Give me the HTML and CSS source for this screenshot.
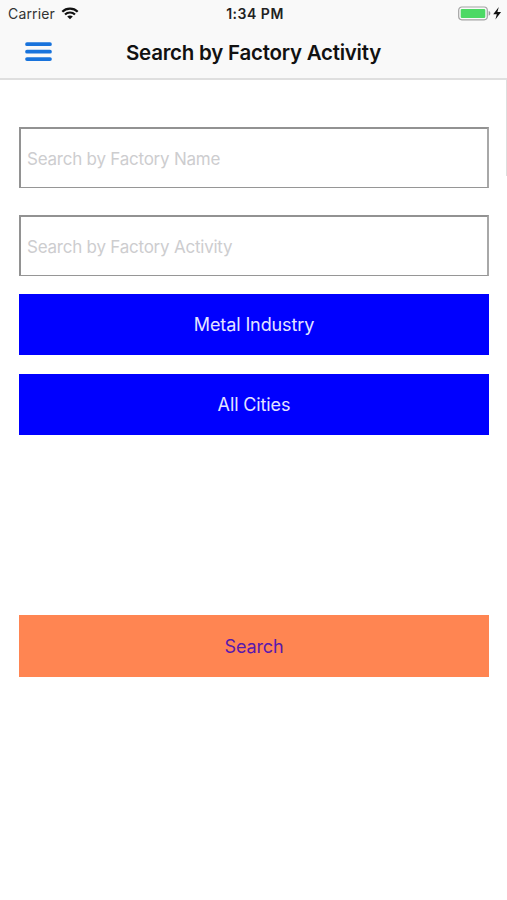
FILE: index.html
```html
<!DOCTYPE html>
<html lang="en">
<head>
<meta charset="utf-8">
<title>Search by Factory Activity</title>
<link rel="stylesheet" href="styles.css">
</head>
<body>
<header class="header">
  <div class="status">
    <div class="carrier"><span class="carrier-name">Carrier</span>
      <svg class="wifi" width="18" height="13" viewBox="0 0 18 13"><path d="M1.3 4.7C5.5.6 12.5.6 16.7 4.7M4 7.5c2.8-2.7 7.2-2.7 10 0" fill="none" stroke="#111" stroke-width="2.2"/><path d="M9 12.3 6.2 9.6c1.6-1.5 4-1.5 5.6 0z" fill="#111"/></svg>
    </div>
    <span class="time">1:34 PM</span>
    <div class="power">
      <svg width="44" height="16" viewBox="0 0 44 16"><rect x=".7" y="1" width="28.6" height="12.8" rx="3.2" fill="#fafafa" stroke="#a3a3a3" stroke-width="1.2"/><rect x="2.7" y="2.9" width="24.6" height="9" rx="1.2" fill="#4cd964"/><path d="M30.7 5.1c2.2.7 2.2 3.9 0 4.6z" fill="#999"/><path d="M40.8 1 35.2 8.2h3.6L37.4 13.5l5.7-7.4h-3.7z" fill="#111"/></svg>
    </div>
  </div>
  <div class="nav">
    <button class="menu" aria-label="Menu"><svg width="27" height="20" viewBox="0 0 27 20"><path d="M2 2.2h23M2 9.7h23M2 17.1h23" stroke="#1873dc" stroke-width="3.7" stroke-linecap="round"/></svg></button>
    <h1 class="title">Search by Factory Activity</h1>
  </div>
</header>
<main class="content">
  <input class="field" type="text" placeholder="Search by Factory Name">
  <input class="field field-activity" type="text" placeholder="Search by Factory Activity">
  <button class="button">Metal Industry</button>
  <button class="button cities">All Cities</button>
  <button class="button search">Search</button>
</main>
</body>
</html>
```
FILE: styles.css
```css
* { box-sizing: border-box; }
body {
  margin: 0;
  height: 900px;
  overflow: hidden;
  background: #fff;
  font-family: Inter, "Liberation Sans", sans-serif;
}
.header {
  height: 80px;
  background: #f9f9f9;
  border-bottom: 2px solid #dfdfdf;
}
.status {
  display: grid;
  grid-template-columns: 1fr auto 1fr;
  align-items: center;
  height: 27px;
  padding: 0 5px 0 8px;
}
.carrier { display: flex; align-items: center; gap: 6px; }
.carrier-name { font-size: 14px; letter-spacing: 0.15px; color: #333; }
.wifi { margin-top: -1px; }
.time { font-size: 14px; font-weight: 600; letter-spacing: 0.5px; color: #222; }
.power { display: flex; justify-content: flex-end; }
.nav {
  display: grid;
  grid-template-columns: 100px 1fr 100px;
  align-items: center;
  height: 50px;
}
.menu {
  display: flex;
  margin: 0 0 0 25px;
  padding: 0;
  width: 27px;
  border: 0;
  background: none;
}
.title {
  margin: 0;
  text-align: center;
  white-space: nowrap;
  font-size: 20.5px;
  font-weight: 600;
  letter-spacing: -0.24px;
  color: #111;
}
.content {
  display: flex;
  flex-direction: column;
  height: 820px;
  padding: 47px 18px 0 19px;
  background: linear-gradient(#dedede, #dedede) right top / 1px 96px no-repeat;
}
.field, .button {
  flex: none;
  height: 61px;
  margin: 0;
  border-radius: 0;
  font-family: inherit;
  font-size: 18px;
}
.field {
  padding: 2px 6px 0;
  border: 2px solid #929292;
  border-right-color: #a8a8a8;
  border-bottom: 1px solid #969696;
  background: #fff;
  font-size: 17px;
  letter-spacing: -0.23px;
}
.field::placeholder { color: #cdcdcf; opacity: 1; }
.field-activity { margin-top: 27px; }
.button {
  margin-top: 18px;
  padding: 0;
  border: 0;
  background: #00f;
  color: #e4e4ff;
  letter-spacing: -0.12px;
}
.cities { margin-top: 19px; }
.search {
  margin-top: 180px;
  height: 62px;
  background: #ff8552;
  color: #5818ae;
}
```
